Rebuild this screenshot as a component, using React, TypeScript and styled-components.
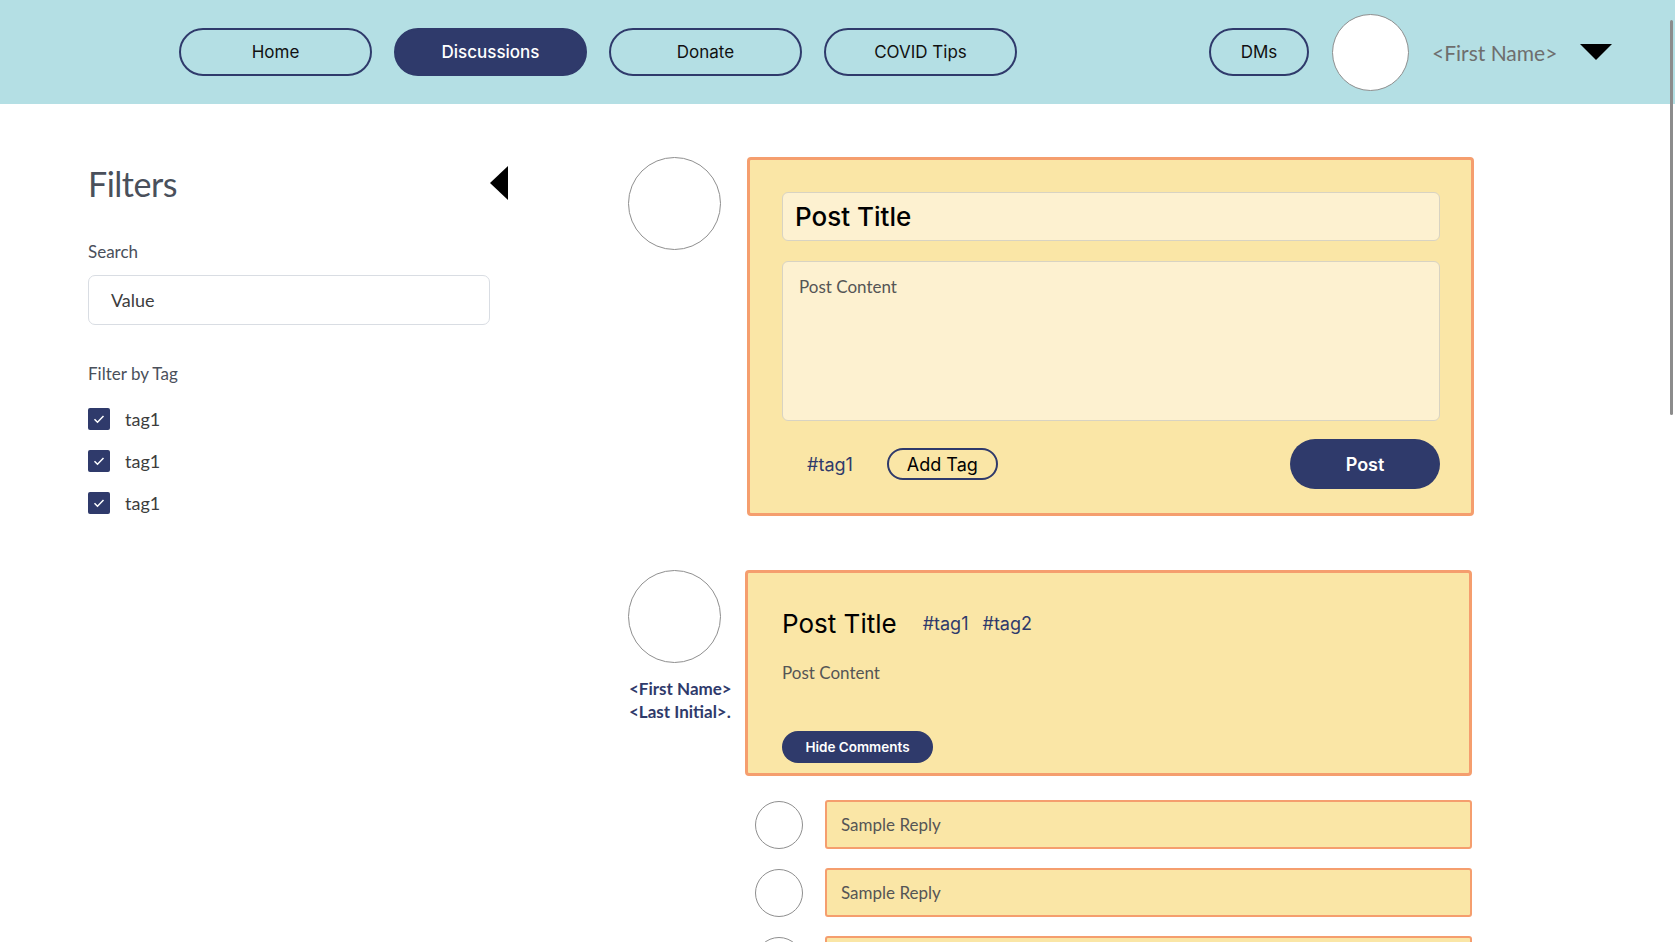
import styled, { createGlobalStyle } from 'styled-components';

const POP = `'Inter', 'Liberation Sans', sans-serif`;
const SEG = `'Lato', 'Open Sans', sans-serif`;
const NAVY = '#2f3a6b';

const GlobalStyle = createGlobalStyle`
  html, body {
    margin: 0;
    padding: 0;
    height: 100%;
    overflow: hidden;
    background: #ffffff;
  }
  * {
    box-sizing: border-box;
  }
`;

const Header = styled.header`
  height: 104px;
  background: #b4dfe4;
  display: flex;
  align-items: center;
  padding-left: 179px;
  padding-right: 63px;
`;

const Nav = styled.nav`
  display: flex;
  gap: 22px;
`;

const NavButton = styled.button<{ $active?: boolean; $width?: number }>`
  width: ${(p) => p.$width ?? 193}px;
  height: 48px;
  border-radius: 24px;
  border: 2px solid ${NAVY};
  background: ${(p) => (p.$active ? NAVY : 'transparent')};
  color: ${(p) => (p.$active ? '#ffffff' : '#111111')};
  font-family: ${POP};
  font-size: 17px;
  font-weight: ${(p) => (p.$active ? 500 : 400)};
  cursor: pointer;
`;

const UserArea = styled.div`
  margin-left: auto;
  display: flex;
  align-items: center;
  gap: 23px;
`;

const Avatar = styled.div<{ $size: number }>`
  width: ${(p) => p.$size}px;
  height: ${(p) => p.$size}px;
  border-radius: 50%;
  border: 1px solid #8f8f8f;
  background: #ffffff;
  flex-shrink: 0;
`;

const HeaderName = styled.span`
  font-family: ${SEG};
  font-size: 21px;
  color: #6e6e6e;
  width: 125px;
  white-space: nowrap;
`;

const DownTriangle = styled.div`
  width: 0;
  height: 0;
  border-left: 16px solid transparent;
  border-right: 16px solid transparent;
  border-top: 16px solid #000000;
`;

const Page = styled.div`
  display: flex;
  padding: 53px 0 0 88px;
`;

const Sidebar = styled.aside`
  width: 420px;
  display: flex;
  flex-direction: column;
`;

const SidebarTop = styled.div`
  display: flex;
  align-items: center;
  justify-content: space-between;
  height: 42px;
  margin-top: 5px;
`;

const Heading = styled.h2`
  margin: 0;
  font-family: ${SEG};
  font-size: 34px;
  font-weight: 400;
  color: #4a505b;
  letter-spacing: -0.5px;
`;

const LeftTriangle = styled.div`
  width: 0;
  height: 0;
  border-top: 17px solid transparent;
  border-bottom: 17px solid transparent;
  border-right: 18px solid #000000;
`;

const FieldLabel = styled.div<{ $top: number }>`
  margin-top: ${(p) => p.$top}px;
  font-family: ${SEG};
  font-size: 17px;
  line-height: 22px;
  color: #4a505b;
`;

const SearchBox = styled.div`
  margin-top: 12px;
  width: 402px;
  height: 50px;
  border: 1px solid #d9dde3;
  border-radius: 7px;
  display: flex;
  align-items: center;
  padding-left: 22px;
  font-family: ${SEG};
  font-size: 18px;
  color: #3d3d3d;
`;

const CheckList = styled.div`
  margin-top: 23px;
  display: flex;
  flex-direction: column;
  gap: 20px;
`;

const CheckRow = styled.label`
  display: flex;
  align-items: center;
  gap: 15px;
  height: 22px;
  font-family: ${SEG};
  font-size: 18px;
  color: #3d3d3d;
`;

const CheckBox = styled.span`
  width: 22px;
  height: 22px;
  border-radius: 2px;
  background: ${NAVY};
  display: flex;
  align-items: center;
  justify-content: center;
`;

const Main = styled.main`
  margin-left: 120px;
  width: 846px;
  display: flex;
  flex-direction: column;
  gap: 54px;
`;

const PostRow = styled.div<{ $gap: number }>`
  display: flex;
  align-items: flex-start;
  gap: ${(p) => p.$gap}px;
`;

const AuthorCol = styled.div`
  width: 93px;
  display: flex;
  flex-direction: column;
  align-items: flex-start;
`;

const AuthorName = styled.div`
  margin: 14px 0 0 1px;
  font-family: ${SEG};
  font-weight: 700;
  font-size: 17px;
  line-height: 23px;
  color: ${NAVY};
  white-space: nowrap;
`;

const Card = styled.div<{ $pad: string }>`
  width: 727px;
  background: #fae6a6;
  border: 3px solid #f59e6e;
  border-radius: 4px;
  padding: ${(p) => p.$pad};
  display: flex;
  flex-direction: column;
`;

const TitleInput = styled.div`
  height: 49px;
  background: #fdf1d0;
  border: 1px solid #d8d3c2;
  border-radius: 6px;
  display: flex;
  align-items: center;
  padding-left: 12px;
  font-family: ${POP};
  font-size: 26px;
  font-weight: 500;
  color: #000000;
`;

const ContentInput = styled.div`
  margin-top: 20px;
  height: 160px;
  background: #fdf1d0;
  border: 1px solid #d8d3c2;
  border-radius: 6px;
  padding: 14px 16px;
  font-family: ${SEG};
  font-size: 17px;
  color: #555555;
`;

const ActionRow = styled.div`
  margin-top: 18px;
  display: flex;
  align-items: center;
`;

const Tag = styled.span<{ $left?: number }>`
  margin-left: ${(p) => p.$left ?? 0}px;
  font-family: ${POP};
  font-size: 18px;
  color: ${NAVY};
`;

const OutlineButton = styled.button`
  margin-left: 34px;
  width: 111px;
  height: 32px;
  border-radius: 16px;
  border: 2px solid ${NAVY};
  background: transparent;
  font-family: ${POP};
  font-size: 18px;
  color: #000000;
`;

const SolidButton = styled.button<{ $w: number; $h: number; $size: number }>`
  width: ${(p) => p.$w}px;
  height: ${(p) => p.$h}px;
  border-radius: ${(p) => p.$h / 2}px;
  border: none;
  background: ${NAVY};
  color: #ffffff;
  font-family: ${POP};
  font-weight: 600;
  font-size: ${(p) => p.$size}px;
`;

const PostButton = styled(SolidButton)`
  margin-left: auto;
`;

const PostHead = styled.div`
  display: flex;
  align-items: center;
  gap: 14px;
  height: 40px;
`;

const PostTitle = styled.h3`
  margin: 0 12px 0 0;
  font-family: ${POP};
  font-size: 26px;
  font-weight: 400;
  color: #000000;
`;

const PostText = styled.p`
  margin: 18px 0 46px;
  font-family: ${SEG};
  font-size: 17px;
  line-height: 24px;
  color: #555555;
`;

const PostColumn = styled.div`
  display: flex;
  flex-direction: column;
`;

const Replies = styled.div`
  margin-top: 24px;
  padding-left: 10px;
  display: flex;
  flex-direction: column;
  gap: 19px;
`;

const ReplyRow = styled.div`
  display: flex;
  align-items: center;
  gap: 22px;
`;

const ReplyBox = styled.div`
  flex: 1;
  height: 49px;
  background: #fae6a6;
  border: 2px solid #f59e6e;
  border-radius: 3px;
  display: flex;
  align-items: center;
  padding-left: 14px;
  font-family: ${SEG};
  font-size: 17px;
  color: #555555;
`;

const ScrollThumb = styled.div`
  position: fixed;
  top: 20px;
  right: 2px;
  width: 3px;
  height: 395px;
  border-radius: 2px;
  background: #8c8c8c;
`;

const Check = () => (
  <svg width="16" height="16" viewBox="0 0 16 16">
    <path d="M3.5 8.2l3 3L12.5 5" fill="none" stroke="#ffffff" strokeWidth="1.5" />
  </svg>
);

const tags = ['tag1', 'tag1', 'tag1'];

export default function App() {
  return (
    <>
      <GlobalStyle />
      <Header>
        <Nav>
          <NavButton>Home</NavButton>
          <NavButton $active>Discussions</NavButton>
          <NavButton>Donate</NavButton>
          <NavButton>COVID Tips</NavButton>
        </Nav>
        <UserArea>
          <NavButton $width={100}>DMs</NavButton>
          <Avatar $size={77} />
          <HeaderName>&lt;First Name&gt;</HeaderName>
          <DownTriangle />
        </UserArea>
      </Header>
      <Page>
        <Sidebar>
          <SidebarTop>
            <Heading>Filters</Heading>
            <LeftTriangle />
          </SidebarTop>
          <FieldLabel $top={37}>Search</FieldLabel>
          <SearchBox>Value</SearchBox>
          <FieldLabel $top={38}>Filter by Tag</FieldLabel>
          <CheckList>
            {tags.map((t, i) => (
              <CheckRow key={i}>
                <CheckBox>
                  <Check />
                </CheckBox>
                {t}
              </CheckRow>
            ))}
          </CheckList>
        </Sidebar>
        <Main>
          <PostRow $gap={26}>
            <AuthorCol>
              <Avatar $size={93} />
            </AuthorCol>
            <Card $pad="32px 31px 24px 32px">
              <TitleInput>Post Title</TitleInput>
              <ContentInput>Post Content</ContentInput>
              <ActionRow>
                <Tag $left={25}>#tag1</Tag>
                <OutlineButton>Add Tag</OutlineButton>
                <PostButton $w={150} $h={50} $size={18}>
                  Post
                </PostButton>
              </ActionRow>
            </Card>
          </PostRow>
          <PostRow $gap={24}>
            <AuthorCol>
              <Avatar $size={93} />
              <AuthorName>
                &lt;First Name&gt;
                <br />
                &lt;Last Initial&gt;.
              </AuthorName>
            </AuthorCol>
            <PostColumn>
              <Card $pad="30px 34px 10px 34px">
                <PostHead>
                  <PostTitle>Post Title</PostTitle>
                  <Tag>#tag1</Tag>
                  <Tag>#tag2</Tag>
                </PostHead>
                <PostText>Post Content</PostText>
                <SolidButton $w={151} $h={32} $size={13.5}>
                  Hide Comments
                </SolidButton>
              </Card>
              <Replies>
                {[0, 1, 2].map((i) => (
                  <ReplyRow key={i}>
                    <Avatar $size={48} />
                    <ReplyBox>Sample Reply</ReplyBox>
                  </ReplyRow>
                ))}
              </Replies>
            </PostColumn>
          </PostRow>
        </Main>
      </Page>
      <ScrollThumb />
    </>
  );
}
